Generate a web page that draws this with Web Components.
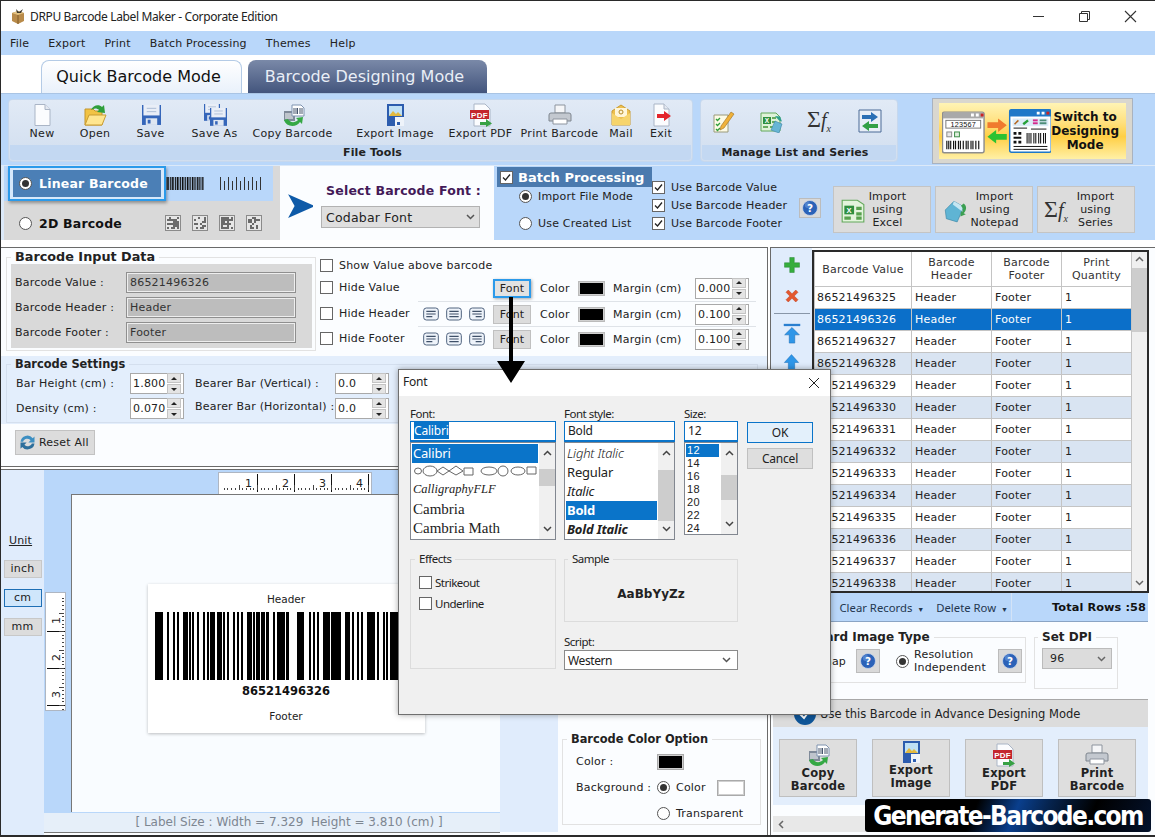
<!DOCTYPE html>
<html>
<head>
<meta charset="utf-8">
<title>DRPU Barcode Label Maker</title>
<style>
  html, body { margin: 0; padding: 0; background: #fff; }
  body { font: 11px "DejaVu Sans", "Liberation Sans", sans-serif; letter-spacing: .2px; color: #222; }
</style>
</head>
<body>
<barcode-app></barcode-app>

<script>
// small helper: every element gets an open shadow root, its own style and a view function
const define = (tag, css, view) => customElements.define(tag, class extends HTMLElement {
  constructor() {
    super();
    this.attachShadow({ mode: 'open' });
  }
  connectedCallback() {
    this.shadowRoot.innerHTML = `<style>${css}</style>${view(this)}`;
  }
});
const attr = (el, name, fallback = '') => el.getAttribute(name) ?? fallback;

const SEGOE = '"Noto Sans", "Open Sans", sans-serif';

// Icons
const floppy = (x, y, s) => `<g transform="translate(${x} ${y}) scale(${s})">
  <path d="M0 0h20v21H0z" fill="#3566ba"/><path d="M1.500 0h17v11h-17z" fill="#e9eef7"/>
  <path d="M5 3.500h10M5 7h10" stroke="#a9bad4"/><path d="M4 14h12v7H4z" fill="#dfe7f2"/><path d="M6 15.500h3v4H6z" fill="#3566ba"/></g>`;
const sheet = `<path d="M11 2h9l3 3v8H11z" fill="#fff" stroke="#7f93b0"/><path d="M13 5v6M15 5v6M16.500 5v6M19 5v6M21 5v6" stroke="#47566e"/>`;
const ICONS = {
  new: `<path d="M5 1.500h10l5 5v16H5z" fill="#fbfcfe" stroke="#aab5c6"/><path d="M15 1.500v5h5" fill="#e4e9f1" stroke="#aab5c6"/>`,
  open: `<path d="M2 9V6h8l2 2h7v14H2z" fill="#f2c344" stroke="#c3962c"/><path d="M6 12h17l-4 10H2z" fill="#ffe690" stroke="#c99c32"/>
    <path d="M8 7c2-5 8-6 11-3l2-2 1 8-8-1 2-2c-2-2-5-2-8 0z" fill="#2f9f3b"/>`,
  save: floppy(3, 2, 0.95),
  saveas: floppy(1, 1, 0.8) + floppy(7, 5, 0.85),
  copy: `<path d="M3 8h11v10H3z" fill="#7f8a99"/><path d="M5 10v6M7 10v6M9 10v6M11 10v6" stroke="#fff"/>${sheet}
    <path d="M3 17c2 7 12 8 16 2l2 2 1-7-7 1 2 2c-3 3-8 3-10-1z" fill="#35a845"/>`,
  image: `<path d="M4 1h17v22H4z" fill="#2c5cae"/><path d="M6 3h13v10H6z" fill="#bfe0f5"/><path d="M6 13l4-5 3 3 2-2 4 4z" fill="#e2b93f"/>
    <path d="M12 14h9v9h-9z" fill="#eef3fa"/><path d="M14 19h3v3h-3z" fill="#2c5cae"/>`,
  pdf: `<path d="M5 1h11l5 5v17H5z" fill="#fbfcfe" stroke="#aab5c6"/><path d="M1 7h19v9H1z" fill="#c4262e"/>
    <text x="10.500" y="14.500" font-size="8" font-weight="700" fill="#fff" text-anchor="middle" font-family="Liberation Sans">PDF</text>
    <path d="M11 19h6v-3l6 4.500-6 3.500v-2h-6z" fill="#37a144"/>`,
  print: `<path d="M7 2h10v8H7z" fill="#f5f6f8" stroke="#8d949e"/><path d="M3 10h18q2 0 2 2v6H1v-6q0-2 2-2z" fill="#c3c8cf" stroke="#7f868f"/>
    <path d="M5 16h14v5H5z" fill="#fff" stroke="#8d949e"/>`,
  mail: `<path d="M3 8l9-6 9 6v14H3z" fill="#edc04e" stroke="#c99b32"/><path d="M6 5h12v9H6z" fill="#fff6d8"/><path d="M3 10l9 6 9-6v12H3z" fill="#f6d46c"/>
    <circle cx="12" cy="9" r="2" fill="none" stroke="#b58a25"/>`,
  exit: `<path d="M5 1h10l5 5v17H5z" fill="#fbfcfe" stroke="#aab5c6"/><path d="M15 1v5h5" fill="#e4e9f1" stroke="#aab5c6"/><path d="M8 11h7V8l7 5-7 5v-3H8z" fill="#e3242b"/>`,
  list: `<path d="M3 6h14v17H3z" fill="#fdfbe6" stroke="#9a9a7a"/><path d="M5 10l1.500 1.500L9 9M5 15l1.500 1.500L9 14M5 20l1.500 1.500L9 19" stroke="#2f9f3b" fill="none" stroke-width="1.300"/>
    <path d="M10 17L20 3l3 2-10 14-4 2z" fill="#f0b23a" stroke="#9c6d1c" stroke-width=".6"/>`,
  excel: `<path d="M2 4h15l4 4v14H2z" fill="#dff2d8" stroke="#62a85a"/><path d="M4 8h8v7H4z" fill="#2f8f3f"/>
    <text x="8" y="14" font-size="6.500" font-weight="700" fill="#fff" text-anchor="middle" font-family="Liberation Sans">X</text>
    <path d="M13 8h4v2h-4zM13 12h4v2h-4zM4 17h5v2H4zM11 17h6v2h-6z" fill="#69ab5f"/>
    <path d="M12 21l4-9 7 3-3 9z" fill="#67b5d5" stroke="#3d86a6" stroke-width=".6"/><path d="M16 7l5 .500 2 5-3-1z" fill="#2f9f8b"/>`,
  excel2: `<path d="M2 3h14l6 4v16H2z" fill="#e3f4dc" stroke="#62a85a"/><path d="M4 8h9v8H4z" fill="#2f8f3f"/>
    <text x="8.500" y="15" font-size="7" font-weight="700" fill="#fff" text-anchor="middle" font-family="Liberation Sans">X</text>
    <path d="M15 9h5v3h-5zM15 14h5v3h-5zM4 18h6v3H4zM15 18h5v3h-5z" fill="#57a14d"/>`,
  notepad: `<path d="M3 12l8-8 9 5-6 14-10-3z" fill="#5fb4d4" stroke="#3d86a6" stroke-width=".6"/><path d="M11 4l9 5-2 4-8-6z" fill="#c5e6f2"/>
    <path d="M20 6c3 2 3 6 0 9l2 1-5 2 .500-5 1 1c1-2 1-4-1-6z" fill="#3c9f52"/>`,
  swap: `<path d="M1 1h22v22H1z" fill="#e8eef7" stroke="#4a6a96"/><path d="M4 8h9V5l7 5-7 5v-3H4z" fill="#2a6fb5" transform="translate(0 -2)"/><path d="M20 15h-9v-3l-7 5 7 5v-3h9z" fill="#33a046"/>`,
  plus: `<path d="M9 2h6v7h7v6h-7v7H9v-7H2V9h7z" fill="#36ad3d" stroke="#1f7f2a" stroke-width=".6"/>`,
  cross: `<path d="M4 7l3-3 5 5 5-5 3 3-5 5 5 5-3 3-5-5-5 5-3-3 5-5z" fill="#e4572e" stroke="#b63a1a" stroke-width=".6"/>`,
  top: `<path d="M3 2h18v2.500H3z" fill="#2a7fd0"/><path d="M12 6l8 8h-5v9H9v-9H4z" fill="#2f96e8" stroke="#1a6bb4" stroke-width=".6"/>`,
  up: `<path d="M12 2l9 10h-5v10H8V12H3z" fill="#2f96e8" stroke="#1a6bb4" stroke-width=".6"/>`,
  reset: `<path d="M4 11a8 8 0 0 1 14-4l2-2v7h-7l2.500-2.500A5 5 0 0 0 7 11z" fill="#3d8fc2"/><path d="M20 13a8 8 0 0 1-14 4l-2 2v-7h7l-2.500 2.500A5 5 0 0 0 17 13z" fill="#2d6f9c"/>`,
  help: `<circle cx="12" cy="12" r="10" fill="#2b62b8" stroke="#cfd9ea"/><circle cx="9" cy="8" r="4" fill="#6b97da" opacity=".6"/>
    <text x="12" y="17" font-size="14" font-weight="700" fill="#fff" text-anchor="middle" font-family="DejaVu Sans">?</text>`,
  left: `<rect x="1" y="3" width="22" height="18" rx="4" fill="#eef3fa" stroke="#51647f" stroke-width="1.500"/><path d="M5 8h14M5 12h14M5 16h9" stroke="#3f5068" stroke-width="1.800"/>`,
  center: `<rect x="1" y="3" width="22" height="18" rx="4" fill="#eef3fa" stroke="#51647f" stroke-width="1.500"/><path d="M5 8h14M5 12h14M5 16h14" stroke="#3f5068" stroke-width="1.800"/>`,
  right: `<rect x="1" y="3" width="22" height="18" rx="4" fill="#eef3fa" stroke="#51647f" stroke-width="1.500"/><path d="M5 8h14M5 12h14M10 16h9" stroke="#3f5068" stroke-width="1.800"/>`,
  pointer: `<path d="M1 2l25 11L1 24l6-11z" fill="#0e5aa8"/>`
};
const icon = (name, size = 24) =>
  `<svg xmlns="http://www.w3.org/2000/svg" width="${size}" height="${size}" viewBox="0 0 24 24" style="display:block;flex:none">${ICONS[name]}</svg>`;

const chevron = (dir, color = '#444') =>
  `<svg width="9" height="6" viewBox="0 0 9 6" style="display:block"><path d="${dir === 'up' ? 'M1 5l3.500-3.500L8 5' : 'M1 1l3.500 3.500L8 1'}" fill="none" stroke="${color}" stroke-width="1.500"/></svg>`;

// sigma + f with small x, the series symbol
const sigmaMark = size => `<span style="font:${size}px 'Liberation Serif',serif;letter-spacing:0;white-space:nowrap;color:#333">&Sigma;<i style="font-size:${Math.round(size * .82)}px">f<sub style="font-size:${Math.round(size * .42)}px">x</sub></i></span>`;

// Bars read from the reference, in 3x units of the screenshot
const BARS = [[465,490],[501,507],[520,526],[531,537],[549,563],[567,574],[577,583],[591,597],[610,616],[620,627],[631,645],[650,664],[668,674],[682,688],[700,706],[711,717],[722,728],[741,755],[759,765],[769,780],[784,795],[797,807],[819,825],[831,854],[859,867],[892,914],[927,933],[938,944],[950,956],[968,990],[994,1024],[1035,1049],[1056,1062],[1071,1077],[1083,1090],[1100,1123],[1131,1137],[1148,1155],[1158,1165],[1170,1196],[1204,1210],[1222,1240],[1250,1256],[1265,1275]];

/* ---------- small widgets ---------- */
define('ui-check', `
  :host { display: inline-flex; align-items: center; gap: 6px; white-space: nowrap; }
  .box { width: 13px; height: 13px; box-sizing: border-box; border: 1px solid #666; background: #fff; flex: none; display: block; }
`, el => `<svg class="box" viewBox="0 0 11 11">${el.hasAttribute('checked') ? '<path d="M2 5.500l2.500 2.500L9 2.500" fill="none" stroke="#222" stroke-width="1.300"/>' : ''}</svg><slot></slot>`);

define('ui-radio', `
  :host { display: inline-flex; align-items: center; gap: 6px; white-space: nowrap; }
  .dot { width: 13px; height: 13px; box-sizing: border-box; border: 1px solid #555; border-radius: 50%; background: #fff; display: grid; place-items: center; flex: none; }
  i { width: 7px; height: 7px; border-radius: 50%; background: #333; }
`, el => `<span class="dot">${el.hasAttribute('checked') ? '<i></i>' : ''}</span><slot></slot>`);

define('spin-box', `
  :host { display: flex; box-sizing: border-box; height: 21px; border: 1px solid #a9a9a9; background: #fff; align-items: center; padding-left: 2px; }
  span { flex: 1; }
  .btns { width: 14px; margin-right: 2px; display: flex; flex-direction: column; gap: 1px; }
  .btns b { height: 8px; background: #e4e4e4; border: 1px solid #c4c4c4; display: grid; place-items: center; box-sizing: content-box; }
  .btns i { width: 0; height: 0; border: 3px solid transparent; }
  .u i { border-bottom: 3px solid #222; border-top: 0; }
  .d i { border-top: 3px solid #222; border-bottom: 0; }
`, el => `<span>${attr(el, 'value')}</span><div class="btns"><b class="u"><i></i></b><b class="d"><i></i></b></div>`);

define('help-button', `
  :host { display: grid; place-items: center; width: 24px; height: 24px; background: #d9d9d9; border: 1px solid #bcbcbc; box-sizing: border-box; }
`, () => icon('help', 18));

define('titled-group', `
  :host { display: block; box-sizing: border-box; }
  fieldset { margin: 0; height: 100%; box-sizing: border-box; border: 1px solid var(--group-line, #e2e2e2); padding: var(--group-pad, 0); min-width: 0; }
  legend { padding: 0 4px; margin-left: var(--legend-left, 5px); font-weight: var(--legend-weight, 700); font-size: var(--legend-size, 12px); color: var(--legend-color, #222); line-height: 14px; white-space: nowrap; letter-spacing: var(--legend-spacing, 0); }
`, el => `<fieldset><legend>${attr(el, 'label')}</legend><slot></slot></fieldset>`);

/* ---------- title, menu, tabs ---------- */
define('title-bar', `
  :host { display: flex; align-items: center; height: 30px; background: #fff; padding-left: 10px; font: 12px ${SEGOE}; color: #222; letter-spacing: -.36px; }
  .t { margin-left: 5px; flex: 1; }
  .c { display: flex; margin-right: 2px; }
  .c svg { display: block; width: 46px; height: 16px; }
`, () => `
  <svg width="14" height="16" viewBox="0 0 14 16"><path d="M1 5l6-2 6 2v8l-6 3-6-3z" fill="#b98b4a"/><path d="M1 5l6 2 6-2-6-2z" fill="#e4c383"/><path d="M7 7v9" stroke="#7f5b28"/><path d="M5 1l3 3 4-3-2 4H6z" fill="#3f3a2f"/></svg>
  <span class="t">DRPU Barcode Label Maker - Corporate Edition</span>
  <div class="c">
    <svg viewBox="0 0 46 16"><path d="M18 8.500h11" stroke="#333"/></svg>
    <svg viewBox="0 0 46 16"><path d="M18.500 5.500h8v8h-8zM20.500 5.500v-2h8v8h-2" fill="none" stroke="#333"/></svg>
    <svg viewBox="0 0 46 16"><path d="M18 3l11 11M29 3L18 14" stroke="#333" stroke-width="1.100"/></svg>
  </div>`);

define('menu-bar', `
  :host { display: flex; align-items: center; gap: 19px; height: 24px; background: #b9d7fa; padding-left: 9px; color: #222; white-space: nowrap; }
`, () => ['File', 'Export', 'Print', 'Batch Processing', 'Themes', 'Help'].map(m => `<span>${m}</span>`).join(''));

define('mode-tabs', `
  :host { display: flex; align-items: flex-end; gap: 6px; height: 38px; padding-left: 40px; background: #fff; }
  div { height: 33px; box-sizing: border-box; border-radius: 8px 8px 0 0; display: flex; align-items: center; justify-content: center; font-size: 16px; letter-spacing: 0; white-space: nowrap; padding: 0 6px 1px 0; }
  .on { width: 201px; color: #111; border: 1px solid #b4cbe6; border-bottom: 0; background: linear-gradient(#fff, #e9f1fb); }
  .off { width: 239px; color: #e9eef6; background: linear-gradient(#7a89a8, #43557d); }
`, () => `<div class="on">Quick Barcode Mode</div><div class="off">Barcode Designing Mode</div>`);

/* ---------- ribbon ---------- */
define('tool-button', `
  :host { display: flex; flex-direction: column; align-items: center; white-space: nowrap; height: 44px; color: #222; letter-spacing: .3px; }
  .i { height: 24px; display: flex; align-items: center; }
`, el => `<div class="i">${icon(attr(el, 'icon'), +attr(el, 'size', 24))}</div><slot></slot>`);

define('tool-group', `
  :host { display: flex; flex-direction: column; box-sizing: border-box; height: 63px; border: 1px solid #c6d8ee; border-radius: 4px; background: linear-gradient(#e1eaf6, #d1deef); }
  .tools { flex: 1; display: flex; padding-top: 3px; min-height: 0; }
  .name { height: 15px; margin: 0 1px 1px; border-radius: 0 0 3px 3px; background: #c3d8f2; font-weight: 700; text-align: center; line-height: 15px; color: #222; letter-spacing: .1px; padding: var(--name-pad, 0); }
`, el => `<div class="tools"><slot></slot></div><div class="name">${attr(el, 'label')}</div>`);

define('switch-button', `
  :host { display: block; width: 201px; height: 66px; box-sizing: border-box; margin-top: -1px; padding: 4px 6px; background: #d9d7cf; border: 1px solid #a9b2bf; }
  .in { height: 100%; display: flex; align-items: center; padding-left: 3px; background: linear-gradient(#fff4b5 0%, #ffe07e 35%, #ffcf45 60%, #fff0a6 100%); }
  .t { flex: 1; text-align: center; font-weight: 700; font-size: 12px; line-height: 14px; letter-spacing: 0; color: #111; padding-right: 7px; }
  svg { display: block; }
`, () => `<div class="in">
  <svg width="113" height="46" viewBox="0 0 113 46">
    <rect x=".5" y="3.500" width="43" height="42" rx="2" fill="#fff" stroke="#8e8e8e" stroke-width="1.500"/><rect x="1" y="4" width="42" height="6" fill="#a9a9a9"/>
    <path d="M30 5h3v3h-3zM35 5h3v3h-3z" fill="#fff"/><path d="M40 5h3v3h-3z" fill="#c22"/>
    <rect x="4" y="12" width="36" height="8" fill="#fff" stroke="#777"/>
    <text x="22" y="19" font-size="7.500" text-anchor="middle" font-family="Liberation Sans" fill="#111">123567</text>
    <rect x="5" y="24" width="5" height="5" fill="#e8e8e8" stroke="#888"/><rect x="13" y="24" width="5" height="5" fill="#dfeedd" stroke="#3a8a44"/>
    <path d="M5 33v9M7 33v9M9 33v9M12 33v9M14 33v9M17 33v9M19 33v9M22 33v9M25 33v9M27 33v9M30 33v9M32 33v9M35 33v9M38 33v9" stroke="#111" stroke-width="1.200"/>
    <path d="M47 14h11v-4l9 7-9 7v-4H47z" fill="#f07a2e"/><path d="M67 26H56v-4l-9 7 9 7v-4h11z" fill="#2cc232"/>
    <rect x="70" y="1" width="43" height="44" rx="2" fill="#fff" stroke="#1f78c8" stroke-width="1.500"/><rect x="70" y="1" width="43" height="7" fill="#1f78c8"/>
    <path d="M98 3h3v3h-3zM103 3h3v3h-3z" fill="#fff"/><path d="M108 3h3v3h-3z" fill="#c22"/>
    <rect x="73" y="10" width="37" height="8" fill="#dcecf8"/><path d="M75 16l4-4" stroke="#b5651d" stroke-width="1.600" fill="none"/>
    <path d="M84 16l5-4" stroke="#27a13a" stroke-width="2.500"/><path d="M94 11h5v2h-5z" fill="#d42a8c"/><path d="M94 14h5v2h-5z" fill="#d42a8c"/><path d="M101 11h7v2h-7zM101 14h7v2h-7z" fill="#4c8c78"/>
    <path d="M74 20h14M92 21h16" stroke="#111"/>
    <path d="M74 24h3v3h-3zM79 24h3v3h-3zM74 29h8v2h-8zM74 33h3v3h-3zM79 33h3v3h-3z" fill="#111"/>
    <path d="M88 25v11M90 25v11M92 25v11M95 25v11M97 25v11M100 25v11M102 25v11M105 25v11M107 25v11" stroke="#111" stroke-width="1.100"/>
    <path d="M74 39h35" stroke="#111"/><path d="M74 42h35" stroke="#111"/>
  </svg>
  <div class="t">Switch to<br>Designing<br>Mode</div></div>`);

define('tool-ribbon', `
  :host { display: flex; height: 72px; box-sizing: border-box; padding: 5px 0 0 7px; gap: 7px; background: #b9d7fa; border-top: 1px solid #a9c4e4; }
  switch-button { margin-left: 27px; }
`, () => `
  <tool-group label="File Tools" style="width:685px;--name-pad:0 0 0 44px">
    <tool-button icon="new" style="width:24px;margin-left:21px">New</tool-button>
    <tool-button icon="open" style="width:30px;margin-left:26px">Open</tool-button>
    <tool-button icon="save" style="width:29px;margin-left:26px">Save</tool-button>
    <tool-button icon="saveas" style="width:47px;margin-left:26px">Save As</tool-button>
    <tool-button icon="copy" style="width:81px;margin-left:14px">Copy Barcode</tool-button>
    <tool-button icon="image" style="width:78px;margin-left:23px">Export Image</tool-button>
    <tool-button icon="pdf" style="width:63px;margin-left:15px">Export PDF</tool-button>
    <tool-button icon="print" style="width:77px;margin-left:9px">Print Barcode</tool-button>
    <tool-button icon="mail" style="width:22px;margin-left:12px">Mail</tool-button>
    <tool-button icon="exit" style="width:20px;margin-left:19px">Exit</tool-button>
  </tool-group>
  <tool-group label="Manage List and Series" style="width:198px;--name-pad:0 8px 0 0">
    <tool-button icon="list" style="width:28px;margin-left:8px;padding-top:6px"></tool-button>
    <tool-button icon="excel" style="width:28px;margin-left:20px;padding-top:6px"></tool-button>
    <span style="width:28px;margin-left:22px;padding-top:3px;display:block">${sigmaMark(24)}</span>
    <tool-button icon="swap" style="width:28px;margin-left:21px;padding-top:6px"></tool-button>
  </tool-group>
  <switch-button></switch-button>`);

/* ---------- option strip ---------- */
define('import-button', `
  :host { display: flex; align-items: center; box-sizing: border-box; width: 98px; height: 47px; background: #dcdcdc; border: 1px solid #c4c4c4; padding: 0 11px 0 6px; }
  .l { flex: 1; text-align: center; line-height: 13px; white-space: pre-line; color: #222; }
`, el => {
  const name = attr(el, 'icon');
  const glyph = name === 'sigma' ? sigmaMark(24) : icon(name, 26);
  return `${glyph}<div class="l"><slot></slot></div>`;
});

define('barcode-type', `
  :host { display: block; width: 276px; height: 74px; background: #d9d9d9; position: relative; }
  .lin { height: 35px; width: 269px; background: #b9d7fa; display: flex; align-items: center; }
  .sel { width: 158px; height: 35px; box-sizing: border-box; margin-left: 4px; margin-top: 0; border: 2px solid #2b9aea; padding: 2px 3px; background: #d6e8fb; box-shadow: 1px 2px 3px rgba(0,0,0,.35); flex: none; }
  .sel div { height: 100%; background: #4b7fb6; display: flex; align-items: center; padding-left: 6px; gap: 7px; color: #fff; font-weight: 700; font-size: 12.500px; white-space: nowrap; }
  .two { height: 39px; box-sizing: border-box; padding: 5px 0 0 15px; display: flex; align-items: center; gap: 7px; font-weight: 700; font-size: 12.500px; color: #111; }
  .qr { display: flex; gap: 11px; margin: -1px 0 0 36px; }
  .qr svg { display: block; }
  .lin svg { display: block; }
`, () => {
  const qr = seed => {
    let cells = '', v = seed * 37 + 11;
    for (let y = 0; y < 6; y++) for (let x = 0; x < 6; x++) {
      v = (v * 137 + 59) % 1009;
      if (v % 5 > 1) cells += `<rect x="${2 + x * 2}" y="${2 + y * 2}" width="2" height="2" fill="#6a6a6a"/>`;
    }
    return `<svg width="16" height="16" viewBox="0 0 16 16"><rect x=".5" y=".5" width="15" height="15" fill="#e6e6e6" stroke="#8a8a8a"/>${cells}</svg>`;
  };
  const dense = Array.from({ length: 22 }, (_, i) => `<rect x="${i * 1.7}" y="0" width="${i % 3 === 0 ? 1.300 : .9}" height="13" fill="#111"/>`).join('');
  const tall = Array.from({ length: 11 }, (_, i) => `<rect x="${i * 4}" y="${i % 2 ? 4 : 0}" width="1" height="${i % 2 ? 9 : 13}" fill="#333"/>`).join('');
  return `<div class="lin">
      <div class="sel"><div><ui-radio checked></ui-radio><span>Linear Barcode</span></div></div>
      <svg width="38" height="13" viewBox="0 0 37 13">${dense}</svg>
      <svg width="42" height="13" viewBox="0 0 42 13" style="margin-left:16px">${tall}</svg>
    </div>
    <div class="two"><ui-radio></ui-radio><span>2D Barcode</span>
      <div class="qr">${qr(1)}${qr(2)}${qr(4)}${qr(6)}</div></div>`;
});

define('font-picker', `
  :host { display: flex; width: 214px; height: 74px; background: #fbfdff; box-sizing: border-box; padding: 17px 0 0 7px; gap: 8px; }
  .p { margin-top: 9px; }
  .c { display: flex; flex-direction: column; align-items: flex-end; gap: 8px; }
  b { color: #431a58; font-size: 12.500px; white-space: nowrap; line-height: 15px; margin-right: -1px; }
  .sel { width: 159px; height: 22px; box-sizing: border-box; background: #dfdfdf; border: 1px solid #b2b2b2; display: flex; align-items: center; justify-content: space-between; padding: 0 4px 0 4px; font-size: 12.500px; color: #222; }
`, () => `<div class="p">${icon('pointer', 26)}</div>
  <div class="c"><b>Select Barcode Font :</b><div class="sel">Codabar Font${chevron('down', '#555')}</div></div>`);

define('batch-panel', `
  :host { display: flex; flex: 1; height: 74px; background: #b9d7fa; padding-left: 3px; }
  .b { width: 155px; flex: none; position: relative; }
  .h { height: 20px; margin-top: 1px; background: #4b7aae; color: #fff; font-weight: 700; font-size: 13px; letter-spacing: 0; display: flex; align-items: center; padding-left: 3px; gap: 5px; white-space: nowrap; }
  .rs { display: flex; flex-direction: column; padding: 3px 0 0 22px; gap: 14px; }
  .rs ui-radio { height: 13px; }
  .cs { width: 147px; display: flex; flex-direction: column; gap: 5px; padding-top: 15px; flex: none; margin-left: 0; }
  .cs ui-check { height: 13px; }
  help-button { margin: 32px 0 0 0; width: 22px; height: 20px; flex: none; }
  .im { display: flex; gap: 4px; margin: 20px 0 0 12px; }
`, () => `<div class="b"><div class="h"><ui-check checked></ui-check>Batch Processing</div>
    <div class="rs"><ui-radio checked>Import File Mode</ui-radio><ui-radio>Use Created List</ui-radio></div></div>
  <div class="cs"><ui-check checked>Use Barcode Value</ui-check><ui-check checked>Use Barcode Header</ui-check><ui-check checked>Use Barcode Footer</ui-check></div>
  <help-button></help-button>
  <div class="im"><import-button icon="excel2" style="padding-right:21px">Import
using
Excel</import-button><import-button icon="notepad">Import
using
Notepad</import-button><import-button icon="sigma">Import
using
Series</import-button></div>`);

define('option-strip', `
  :host { display: flex; height: 75px; background: #dce9f8; padding: 1px 0 0 3px; box-sizing: border-box; }
`, () => `<barcode-type></barcode-type><font-picker></font-picker><batch-panel></batch-panel>`);

/* ---------- upper left panel ---------- */
define('style-row', `
  :host { display: flex; align-items: center; height: 25px; }
  ui-check { width: 98px; flex: none; }
  .r { flex: 1; height: 100%; display: flex; align-items: center; box-sizing: border-box; border-top: 1px solid #dfe3e8; }
  :host([first]) .r { border-top-color: transparent; }
  .al { width: 75px; flex: none; padding-left: 5px; box-sizing: border-box; display: flex; gap: 7px; }
  .f { width: 38px; height: 19px; box-sizing: border-box; flex: none; display: grid; place-items: center; background: #dcdcdc; border: 1px solid #c0c0c0; }
  :host([first]) .f { border: 2px solid #2b9aea; box-shadow: 1px 1px 3px rgba(0,0,0,.35); background: #e2e2e2; }
  .cl { margin-left: 9px; width: 38px; flex: none; }
  .sw { width: 27px; height: 15px; box-sizing: border-box; background: #000; border: 2px solid #d0d0d0; outline: 1px solid #bbb; outline-offset: -1px; flex: none; }
  .m { margin-left: 8px; width: 82px; flex: none; white-space: nowrap; }
  spin-box { width: 54px; flex: none; }
`, el => `<ui-check>${attr(el, 'label')}</ui-check><div class="r">
    <div class="al">${el.hasAttribute('first') ? '' : icon('left', 16) + icon('center', 16) + icon('right', 16)}</div>
    <div class="f">Font</div><span class="cl">Color</span><div class="sw"></div><span class="m">Margin (cm)</span>
    <spin-box value="${attr(el, 'margin')}"></spin-box></div>`);

define('input-panel', `
  :host { display: flex; flex-direction: column; height: 220px; box-sizing: border-box; background: #fbfdff; border: 1px solid #6a6a6a; border-left: 0; }
  .top { display: flex; height: 108px; flex: none; }
  .data { margin: 2px 0 0 5px; width: 310px; height: 101px; --group-pad: 0 3px 3px 4px; --legend-left: 0; --legend-size: 12.800px; }
  .grey { background: #d9d9d9; display: grid; grid-template-columns: 111px 170px; gap: 4px 0; padding: 8px 16px 5px 4px; align-items: center; }
  .fld { height: 21px; box-sizing: border-box; background: #bdbdbd; border: 1px solid #8f8f8f; outline: 1px solid #eee; outline-offset: -2px; padding-left: 3px; line-height: 19px; color: #333; }
  .side { padding: 7px 0 0 4px; flex: 1; margin-right: 11px; }
  .side > ui-check { display: flex; height: 20px; }
  .band { background: #e3eefc; height: 68px; flex: none; padding: 1px 0 0 5px; box-sizing: border-box; --group-line: #d4dfee; --group-pad: 2px 0 0 9px; }
  .band titled-group { height: 66px; width: 752px; --legend-left: -5px; --legend-size: 11.400px; }
  .sg { display: grid; grid-template-columns: 114px 54px 151px 54px; column-gap: 0; row-gap: 4px; align-items: center; }
  .sg .g { padding-left: 11px; }
  .sg spin-box { width: 54px; }
  .sg .g:nth-of-type(4) { margin-top: -4px; }
  .reset { padding: 6px 0 0 14px; }
  .rb { display: inline-flex; align-items: center; gap: 1px; width: 80px; height: 25px; box-sizing: border-box; background: #dcdcdc; border: 1px solid #c2c2c2; padding-left: 1px; font-size: 11px; }
`, () => `<div class="top">
    <titled-group class="data" label="Barcode Input Data">
      <div class="grey">
        <span>Barcode Value :</span><div class="fld">86521496326</div>
        <span>Barcode Header :</span><div class="fld">Header</div>
        <span>Barcode Footer :</span><div class="fld">Footer</div>
      </div>
    </titled-group>
    <div class="side">
      <ui-check>Show Value above barcode</ui-check>
      <style-row first label="Hide Value" margin="0.000"></style-row>
      <style-row label="Hide Header" margin="0.100" style="margin-top:1px"></style-row>
      <style-row label="Hide Footer" margin="0.100"></style-row>
    </div>
  </div>
  <div class="band"><titled-group label="Barcode Settings">
    <div class="sg">
      <span>Bar Height (cm) :</span><spin-box value="1.800"></spin-box><span class="g">Bearer Bar (Vertical) :</span><spin-box value="0.0"></spin-box>
      <span>Density (cm) :</span><spin-box value="0.070"></spin-box><span class="g">Bearer Bar (Horizontal) :</span><spin-box value="0.0"></spin-box>
    </div></titled-group></div>
  <div class="reset"><div class="rb">${icon('reset', 21)}Reset All</div></div>`);

/* ---------- preview ---------- */
define('ruler-strip', `
  :host { display: block; background: #fff; border: 1px solid #aeb6c2; box-sizing: border-box; }
  svg { display: block; }
  text { font: 11px "DejaVu Sans", sans-serif; fill: #222; }
`, el => {
  const vertical = el.hasAttribute('vertical');
  const w = vertical ? 21 : 154, h = vertical ? 119 : 21;
  let marks = '';
  for (let n = 1; n <= (vertical ? 3 : 4); n++) {
    const p = n * 37 + 1;
    if (vertical) {
      marks += `<path d="M1 ${p}.5H${w - 2}" stroke="#111"/><text transform="translate(14 ${p - 7}) rotate(-90)">${n}</text>`;
    } else {
      marks += `<path d="M${p}.5 1V${h - 2}" stroke="#111"/><text x="${p - 12}" y="14">${n}</text>`;
    }
  }
  for (let t = 1; t < 41; t++) {
    const p = Math.round(t * 3.7) + 1;
    const l = t % 5 === 0 ? 5 : 2;
    marks += vertical ? `<path d="M${w - 3 - l} ${p}.5H${w - 3}" stroke="#444"/>` : `<path d="M${p}.5 ${h - 4 - l}V${h - 4}" stroke="#444"/>`;
  }
  return `<svg width="${w - 2}" height="${h - 2}" viewBox="0 0 ${w - 2} ${h - 2}">${marks}</svg>`;
});

define('barcode-label', `
  :host { display: block; width: 277px; height: 149px; background: #fff; box-shadow: 0 1px 3px rgba(0,0,0,.25); box-sizing: border-box; padding-top: 8px; position: relative; letter-spacing: 0; }
  .t { text-align: center; width: 276px; font-size: 10.500px; line-height: 14px; color: #222; }
  svg { display: block; margin: 6px 0 0 7px; }
  .n { text-align: center; width: 276px; font-weight: 700; font-size: 11.500px; line-height: 16px; margin-top: 3px; color: #111; }
  .f { margin-top: 10px; }
`, () => {
  const bars = BARS.map(([a, b]) => {
    const x = Math.round(a / 3) - 155;
    return `<rect x="${x}" y="0" width="${Math.max(2, Math.round((b - a) / 3))}" height="68" fill="#000"/>`;
  }).join('');
  return `<div class="t">Header</div>
    <svg width="263" height="68" viewBox="0 0 263 68" shape-rendering="crispEdges">${bars}</svg>
    <div class="n">86521496326</div><div class="t f">Footer</div>`;
});

define('preview-panel', `
  :host { display: flex; height: 366px; box-sizing: border-box; background: #fbfdff; border: 1px solid #6a6a6a; border-left: 0; border-bottom: 0; }
  .units { width: 43px; flex: none; background: #e0ecfc; display: flex; flex-direction: column; align-items: center; box-sizing: border-box; padding-top: 64px; }
  .units u { margin: 0 4px 13px 0; line-height: 13px; }
  .u { width: 38px; height: 18px; box-sizing: border-box; background: #dcdcdc; border: 1px solid #c8c8c8; text-align: center; line-height: 16px; margin: 0 0 11px 0; }
  .u.on { background: #cfe6fb; border-color: #1f6fb5; }
  .area { width: 456px; flex: none; background: #b9d7fa; display: flex; flex-direction: column; margin-bottom: 2px; border-bottom: 1px solid #777; }
  .rt { height: 24px; flex: none; padding: 2px 0 0 174px; box-sizing: border-box; }
  .rt ruler-strip { width: 154px; height: 22px; border-bottom: 0; }
  .mid { flex: 1; display: flex; min-height: 0; }
  .gut { width: 27px; flex: none; padding: 98px 0 0 1px; box-sizing: border-box; }
  .gut ruler-strip { width: 21px; }
  .canvas { flex: 1; background: #f9fcff; border: 1px solid #777; border-width: 1px 0 0 1px; padding: 89px 0 0 76px; box-sizing: border-box; }
  .st { height: 19px; flex: none; margin-top: 1px; background: #e6eff9; color: #7d8691; font-size: 12px; letter-spacing: 0; text-align: center; line-height: 19px; white-space: pre; padding-left: 34px; }
  .pale { width: 58px; flex: none; background: #e0ecfc; margin-bottom: 3px; }
  .opt { flex: 1; display: flex; flex-direction: column; justify-content: flex-end; padding: 0 6px 10px 4px; }
  .opt titled-group { height: 93px; --legend-left: -9px; --legend-size: 11.400px; --group-pad: 3px 0 0 13px; }
  .og { display: grid; grid-template-columns: 81px 60px auto; grid-template-rows: 25px 27px 25px; align-items: center; }
  .sw { width: 27px; height: 16px; box-sizing: border-box; background: #000; border: 2px solid #d0d0d0; outline: 1px solid #aaa; outline-offset: -1px; }
  .sw.w { background: #fff; width: 28px; }
`, () => `
  <div class="units"><u>Unit</u><div class="u">inch</div><div class="u on">cm</div><div class="u">mm</div></div>
  <div class="area">
    <div class="rt"><ruler-strip></ruler-strip></div>
    <div class="mid">
      <div class="gut"><ruler-strip vertical></ruler-strip></div>
      <div class="canvas"><barcode-label></barcode-label></div>
    </div>
    <div class="st">[ Label Size : Width = 7.329  Height = 3.810 (cm) ]</div>
  </div>
  <div class="pale"></div>
  <div class="opt"><titled-group label="Barcode Color Option">
    <div class="og">
      <span>Color :</span><div class="sw"></div><span></span>
      <span>Background :</span><ui-radio checked>Color</ui-radio><div class="sw w"></div>
      <span></span><ui-radio style="grid-column:span 2">Transparent</ui-radio>
    </div></titled-group></div>`);

/* ---------- right side ---------- */
define('records-table', `
  :host { display: flex; height: 343px; box-sizing: border-box; border: 2px solid #2a2a2a; background: #fff; overflow: hidden; letter-spacing: .2px; }
  table { border-collapse: collapse; table-layout: fixed; width: 317px; flex: none; align-self: flex-start; }
  th { font-weight: 400; height: 34px; line-height: 13px; border: 1px solid #c4c4c4; border-top: 0; padding: 0; color: #333; }
  td { height: 22px; padding: 0 0 0 3px; border: 1px solid #c4c4c4; box-sizing: border-box; white-space: nowrap; overflow: hidden; color: #222; }
  td:first-child { padding-left: 2px; }
  tr.alt td { background: #d9e4f2; }
  tr.sel td { background: #0b6fc9; color: #fff; }
  .sb { flex: 1; background: #f0f0f0; display: flex; flex-direction: column; align-items: center; justify-content: space-between; padding: 4px 0 5px; position: relative; }
  .sb i { position: absolute; top: 16px; left: 0; right: 0; height: 64px; background: #cdcdcd; }
`, () => {
  const rows = [];
  for (let i = 0; i < 14; i++) {
    const cls = i === 1 ? 'sel' : (i >= 3 && i % 2 === 1 ? 'alt' : '');
    rows.push(`<tr class="${cls}"><td>${86521496325 + i}</td><td>Header</td><td>Footer</td><td>1</td></tr>`);
  }
  return `<table><colgroup><col style="width:97px"><col style="width:80px"><col style="width:70px"><col style="width:70px"></colgroup>
    <tr><th>Barcode Value</th><th>Barcode<br>Header</th><th>Barcode<br>Footer</th><th>Print<br>Quantity</th></tr>${rows.join('')}</table>
    <div class="sb">${chevron('up', '#666')}<i></i>${chevron('down', '#666')}</div>`;
});

define('records-bar', `
  :host { display: flex; align-items: center; height: 29px; box-sizing: border-box; background: #b9d7fa; font: 11.300px ${SEGOE}; letter-spacing: 0; color: #23364f; border-bottom: 1px solid #8aa4c4; white-space: nowrap; }
  .l { width: 241px; flex: none; height: 100%; display: flex; align-items: center; justify-content: flex-end; gap: 12px; padding-right: 3px; box-sizing: border-box; border-right: 1px solid #d3e3f7; }
  .c { font-size: 7px; margin-left: 5px; }
  b { flex: 1; text-align: right; font: 700 11.300px "DejaVu Sans", sans-serif; letter-spacing: .1px; color: #111; padding-right: 2px; }
`, () => `<div class="l"><span class="c">&#9660;</span><span>Clear Records<span class="c">&#9660;</span></span><span>Delete Row<span class="c">&#9660;</span></span></div><b>Total Rows :58</b>`);

define('action-button', `
  :host { display: flex; flex-direction: column; align-items: center; justify-content: center; width: 78px; height: 58px; box-sizing: border-box; background: #dedede; border: 1px solid #bfbfbf; font-weight: 700; font-size: 11.500px; text-align: center; line-height: 13px; color: #222; }
  .t { white-space: pre-line; }
`, el => `${icon(attr(el, 'icon'), +attr(el, 'size', 24))}<div class="t"><slot></slot></div>`);

define('side-panel', `
  :host { display: flex; flex-direction: column; height: 588px; box-sizing: border-box; background: #fbfdff; border-top: 1px solid #6a6a6a; border-left: 1px solid #6a6a6a; }
  .t { display: flex; flex: none; padding-right: 6px; }
  .tools { width: 41px; flex: none; background: #e0ecfc; display: flex; flex-direction: column; align-items: center; padding-top: 8px; }
  .tools hr { width: 36px; margin: 8px 0; border: 0; border-top: 1px solid #8896a8; }
  .tb { flex: 1; min-width: 0; padding-top: 2px; }
  .bar { margin-left: 0; margin-right: 7px; flex: none; }
  .grp { display: flex; height: 64px; flex: none; padding: 8px 0 0 2px; box-sizing: border-box; }
  .grp titled-group { height: 53px; }
  .img { width: 253px; --legend-left: 5px; height: 53px !important; }
  .dpi { width: 84px; margin-left: 8px; height: 59px !important; --legend-left: 3px; }
  .row { display: flex; align-items: center; justify-content: flex-end; padding: 0 3px 0 0; gap: 0; height: 34px; }
  .row .res { line-height: 13px; margin-right: 12px; white-space: nowrap; }
  .dsel { margin: 4px 0 0 7px; width: 70px; height: 21px; box-sizing: border-box; background: #dcdcdc; border: 1px solid #bbb; display: flex; align-items: center; justify-content: space-between; padding: 0 5px 0 7px; }
  .use { height: 28px; flex: none; margin: 13px 7px 0 2px; background: #dcdcdc; border-top: 1px solid #a8a8a8; display: flex; align-items: center; padding-left: 47px; box-sizing: border-box; position: relative; font-size: 11.500px; letter-spacing: 0; white-space: nowrap; }
  .use svg { position: absolute; left: 21px; top: 3px; }
  .acts { height: 78px; flex: none; margin: 0 7px 0 2px; background: #e3eefc; display: flex; gap: 15px; padding: 12px 0 0 6px; box-sizing: border-box; }
  .scroll { flex: none; height: 16px; margin: 11px 7px 0 2px; background: #e8e8e8; display: flex; align-items: center; padding-left: 5px; }
`, () => `
  <div class="t">
    <div class="tools">${icon('plus', 18)}<div style="height:13px"></div>${icon('cross', 18)}<hr>${icon('top', 22)}<div style="height:9px"></div>${icon('up', 19)}</div>
    <div class="tb"><records-table></records-table></div>
  </div>
  <records-bar class="bar"></records-bar>
  <div class="grp">
    <titled-group class="img" label="Clipboard Image Type">
      <div class="row"><ui-radio>Bitmap</ui-radio><span style="width:10px"></span><help-button></help-button><span style="width:16px"></span>
        <ui-radio checked></ui-radio><span style="width:5px"></span><span class="res">Resolution<br>Independent</span><help-button></help-button></div>
    </titled-group>
    <titled-group class="dpi" label="Set DPI"><div class="dsel">96${chevron('down', '#666')}</div></titled-group>
  </div>
  <div class="use"><svg width="22" height="22" viewBox="0 0 22 22"><circle cx="11" cy="11" r="11" fill="#0f5597"/><path d="M6 11l4 4 6-8" fill="none" stroke="#fff" stroke-width="2"/></svg>Use this Barcode in Advance Designing Mode</div>
  <div class="acts">
    <action-button icon="copy">Copy
Barcode</action-button>
    <action-button icon="image" style="padding-bottom:7px">Export
Image</action-button>
    <action-button icon="pdf">Export
PDF</action-button>
    <action-button icon="print">Print
Barcode</action-button>
  </div>
  <div class="scroll"><svg width="6" height="9" viewBox="0 0 6 9"><path d="M5 1L1.500 4.500 5 8" fill="none" stroke="#666" stroke-width="1.500"/></svg></div>`);

/* ---------- font dialog (floats over the window) ---------- */
define('list-box', `
  :host { display: flex; box-sizing: border-box; border: 1px solid #828790; background: #fff; overflow: hidden; }
  .rows { flex: 1; min-width: 0; padding: 1px; }
  .sb { width: 16px; flex: none; background: #f0f0f0; position: relative; display: flex; flex-direction: column; align-items: center; justify-content: space-between; padding: 7px 0; box-sizing: border-box; }
  .sb i { position: absolute; left: 0; right: 0; background: #cdcdcd; }
`, el => `<div class="rows"><slot></slot></div><div class="sb">${chevron('up')}<i style="top:${attr(el, 'thumb')}px;height:${attr(el, 'thumb-h')}px"></i>${chevron('down')}</div>`);

define('font-dialog', `
  :host { position: absolute; left: 397px; top: 368px; width: 433px; height: 346px; box-sizing: border-box; background: #f0f0f0; border: 1px solid #6f6f6f; box-shadow: 0 0 6px rgba(0,0,0,.35); font: 11.500px ${SEGOE}; color: #222; letter-spacing: -.5px; --group-line: #dcdcdc; --legend-weight: 400; --legend-size: 11.500px; --legend-spacing: -.5px; --legend-left: 4px; --legend-color: #222; }
  .head { height: 26px; box-sizing: border-box; background: #fff; display: flex; align-items: center; justify-content: space-between; padding: 0 10px 3px 4px; font-size: 12px; letter-spacing: -.2px; }
  .head svg { margin-top: 3px; }
  .top { display: flex; padding: 10px 0 0 11px; }
  .col { display: flex; flex-direction: column; }
  .col label { line-height: 15px; height: 15px; }
  .inp { height: 21px; box-sizing: border-box; border: 1px solid #0a74c9; border-width: 1px 1px 2px; background: #fff; padding: 0 3px; line-height: 18px; font-size: 12px; letter-spacing: -.2px; }
  .inp mark { background: #0a74c9; color: #fff; }
  list-box { margin-top: 0; height: 98px; }
  .r { height: 19px; line-height: 19px; padding-left: 1px; font-size: 13px; letter-spacing: -.2px; white-space: nowrap; overflow: hidden; }
  .on { background: #0a74c9; color: #fff; }
  .sm .r { height: 13px; line-height: 13px; font: 11px "Liberation Sans", sans-serif; letter-spacing: .3px; width: 32px; overflow: visible; }
  .bt { width: 66px; box-sizing: border-box; text-align: center; margin-left: 9px; font-size: 12px; letter-spacing: -.2px; }
  .ok { height: 21px; margin-top: 16px; background: #e3f0fb; border: 1px solid #0a74c9; line-height: 19px; }
  .ca { height: 21px; margin-top: 5px; background: #dedede; border: 1px solid #c0c0c0; line-height: 19px; }
  .btm { display: flex; padding: 12px 0 0 11px; }
  .eff { width: 146px; height: 117px; --legend-left: -4px; --group-pad: 6px 0 0 8px; }
  .eff ui-check { display: flex; height: 21px; gap: 3px; }
  .rc { width: 174px; margin-left: 8px; }
  .smp { height: 70px; display: block; --legend-left: 3px; }
  .smp div { display: grid; place-items: center; height: 56px; font: 700 12px "DejaVu Sans", sans-serif; letter-spacing: 0; color: #222; }
  .rc label { display: block; margin-top: 12px; line-height: 15px; }
  .sel { height: 20px; box-sizing: border-box; border: 1px solid #8a8a8a; background: #fff; margin-top: 1px; display: flex; align-items: center; justify-content: space-between; padding: 0 6px 0 3px; font-size: 12px; letter-spacing: -.4px; }
`, () => `
  <div class="head"><span>Font</span><svg width="12" height="12" viewBox="0 0 12 12"><path d="M1 1l10 10M11 1L1 11" stroke="#222"/></svg></div>
  <div class="top">
    <div class="col" style="width:146px"><label>Font:</label><div class="inp"><mark>Calibri</mark></div>
      <list-box thumb="26" thumb-h="17">
        <div class="r on">Calibri</div>
        <div class="r"><svg width="126" height="15" viewBox="0 0 126 15"><g fill="none" stroke="#666"><ellipse cx="5" cy="8" rx="3.500" ry="3"/><ellipse cx="17" cy="8" rx="7" ry="5"/><path d="M24 8l6-4 6 4-6 4zM36 8l7-5 7 5-7 4z"/><path d="M51 5h9v7h-9z"/><ellipse cx="76" cy="8" rx="8" ry="4"/><circle cx="90" cy="8" r="5"/><ellipse cx="105" cy="8" rx="7" ry="4"/><path d="M114 4h9v7h-9z"/></g></svg></div>
        <div class="r" style="font:italic 12.500px 'Liberation Serif',serif;letter-spacing:0">CalligraphyFLF</div>
        <div class="r" style="font:15px 'Liberation Serif',serif;letter-spacing:0">Cambria</div>
        <div class="r" style="font:15px 'Liberation Serif',serif;letter-spacing:0">Cambria Math</div>
      </list-box></div>
    <div class="col" style="width:111px;margin-left:8px"><label>Font style:</label><div class="inp">Bold</div>
      <list-box thumb="27" thumb-h="51">
        <div class="r" style="font-style:italic;font-weight:300">Light Italic</div>
        <div class="r">Regular</div>
        <div class="r" style="font-style:italic">Italic</div>
        <div class="r on" style="font-weight:700">Bold</div>
        <div class="r" style="font-style:italic;font-weight:700">Bold Italic</div>
      </list-box></div>
    <div class="col" style="width:54px;margin-left:9px"><label>Size:</label><div class="inp">12</div>
      <list-box class="sm" style="height:93px" thumb="32" thumb-h="25">
        <div class="r on">12</div><div class="r">14</div><div class="r">16</div><div class="r">18</div><div class="r">20</div><div class="r">22</div><div class="r">24</div>
      </list-box></div>
    <div class="col"><div class="bt ok">OK</div><div class="bt ca">Cancel</div></div>
  </div>
  <div class="btm">
    <titled-group class="eff" label="Effects"><ui-check>Strikeout</ui-check><ui-check>Underline</ui-check></titled-group>
    <div class="rc">
      <titled-group class="smp" label="Sample"><div>AaBbYyZz</div></titled-group>
      <label>Script:</label>
      <div class="sel">Western${chevron('down', '#555')}</div>
    </div>
  </div>`);

define('pointer-arrow', `
  :host { position: absolute; left: 496px; top: 296px; width: 28px; height: 86px; }
  svg { display: block; }
`, () => `<svg width="28" height="86" viewBox="0 0 28 86"><path d="M12 0h4v64h12L14 86 0 64h12z" fill="#000"/></svg>`);

define('brand-badge', `
  :host { position: absolute; left: 864px; top: 798px; width: 286px; height: 33px; box-sizing: border-box; border-radius: 3px; background: linear-gradient(112deg, #000 0 38%, #0a3f8d 52%, #06244f 62%, #000 78%, #04122c 100%); color: #fff; display: flex; align-items: center; justify-content: center; font: 700 26px "DejaVu Sans Condensed", "DejaVu Sans", sans-serif; letter-spacing: -1.650px; white-space: nowrap; }
`, () => `Generate-Barcode.com`);

/* ---------- window ---------- */
define('barcode-app', `
  :host { display: flex; flex-direction: column; position: relative; width: 1155px; height: 837px; box-sizing: border-box; overflow: hidden; background: #fff; border: solid #2a2a2a; border-width: 1px 0 2px 1px; }
  .work { display: grid; grid-template-columns: 767px 385px; column-gap: 2px; margin-top: 7px; flex: 1; min-height: 0; }
  .left { display: flex; flex-direction: column; gap: 2px; }
`, () => `
  <title-bar></title-bar>
  <menu-bar></menu-bar>
  <mode-tabs></mode-tabs>
  <tool-ribbon></tool-ribbon>
  <option-strip></option-strip>
  <div class="work">
    <div class="left"><input-panel></input-panel><preview-panel></preview-panel></div>
    <side-panel></side-panel>
  </div>
  <font-dialog></font-dialog>
  <pointer-arrow></pointer-arrow>
  <brand-badge></brand-badge>`);
</script>
</body>
</html>
